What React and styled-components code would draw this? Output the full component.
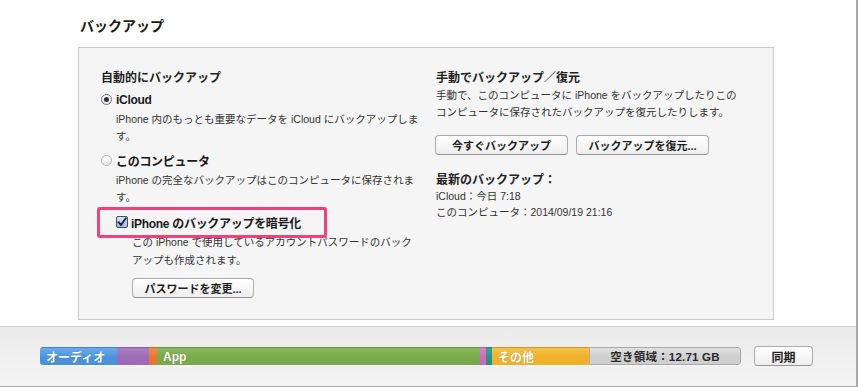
import React from 'react';
import styled, { createGlobalStyle } from 'styled-components';

const GlobalStyle = createGlobalStyle`
	html, body {
		margin: 0;
		padding: 0;
		background: #ffffff;
	}
	body {
		font-family: 'Liberation Sans', 'Noto Sans CJK JP', sans-serif;
		color: #222;
	}
`;

const Window = styled.div`
	width: 858px;
	height: 387px;
	box-sizing: border-box;
	border-right: 2px solid #a9a9a9;
	display: flex;
	flex-direction: column;
	background: #fff;
	overflow: hidden;
`;

const Main = styled.div`
	height: 326px;
	box-sizing: border-box;
	padding: 17px 0 0 78px;
`;

const Title = styled.h1`
	margin: 0 0 12px 2px;
	font-size: 14px;
	line-height: 18px;
	font-weight: bold;
	color: #1a1a1a;
`;

const Panel = styled.div`
	width: 696px;
	height: 273px;
	box-sizing: border-box;
	border: 1px solid #c9c9c9;
	background: #f5f5f5;
	padding: 22px 0 0 22px;
	display: grid;
	grid-template-columns: 335px 1fr;
`;

const Column = styled.div`
	display: flex;
	flex-direction: column;
	align-items: flex-start;
`;

const Heading = styled.div`
	font-size: 12px;
	line-height: 16px;
	font-weight: bold;
	color: #222;
	margin-top: ${(p) => p.$mt || 0}px;
`;

const OptionRow = styled.label`
	position: relative;
	display: flex;
	align-items: center;
	height: ${(p) => p.$h || 19}px;
	margin-top: ${(p) => p.$mt || 0}px;
	padding-left: ${(p) => p.$indent || 0}px;
	font-size: 12px;
	font-weight: bold;
	color: #1a1a1a;
	gap: ${(p) => p.$gap || 4}px;
	letter-spacing: -0.3px;
`;

const Radio = styled.span`
	width: 11px;
	height: 11px;
	box-sizing: border-box;
	border-radius: 50%;
	border: 1px solid ${(p) => (p.$checked ? '#707070' : '#b4b4b4')};
	background: linear-gradient(#ffffff, #e6e6e6);
	display: flex;
	align-items: center;
	justify-content: center;
	&::after {
		content: '';
		display: ${(p) => (p.$checked ? 'block' : 'none')};
		width: 5px;
		height: 5px;
		border-radius: 50%;
		background: #2b3340;
	}
`;

const CheckBox = styled.span`
	width: 12px;
	height: 12px;
	box-sizing: border-box;
	border: 1px solid #3e4f6b;
	border-radius: 2px;
	background: linear-gradient(#dce6f3, #a3b8d6);
	display: flex;
	align-items: center;
	justify-content: center;
`;

/* pink annotation drawn over the encrypt option */
const Highlight = styled.span`
	position: absolute;
	left: -4px;
	top: -6px;
	width: 230px;
	height: 31px;
	box-sizing: border-box;
	border: 3px solid #f0407e;
	border-radius: 3px;
	pointer-events: none;
`;

const Desc = styled.div`
	font-size: 10.5px;
	line-height: ${(p) => p.$lh || 17}px;
	color: #333;
	width: ${(p) => p.$w}px;
	margin-top: ${(p) => p.$mt || 0}px;
	margin-left: ${(p) => p.$indent || 0}px;
`;

const Button = styled.button`
	height: 20px;
	width: ${(p) => p.$w}px;
	box-sizing: border-box;
	margin: 0;
	padding: 0;
	border: 1px solid #acacac;
	border-bottom-color: #959595;
	border-radius: 4px;
	background: linear-gradient(#ffffff, #eeeeee);
	font-family: inherit;
	font-size: 11px;
	font-weight: bold;
	color: #1e1e1e;
	cursor: default;
	margin-top: ${(p) => p.$mt || 0}px;
	margin-left: ${(p) => p.$indent || 0}px;
`;

const ButtonRow = styled.div`
	display: flex;
	gap: 8px;
	margin-top: ${(p) => p.$mt || 0}px;
	margin-left: -1px;
`;

const Footer = styled.div`
	flex: 1;
	box-sizing: border-box;
	border-top: 1px solid #d0d0d0;
	border-bottom: 1px solid #a8a8a8;
	background: linear-gradient(#ebebeb, #f4f4f4);
	padding: 19px 0 0 40px;
	display: flex;
	align-items: flex-start;
	gap: 13px;
`;

const StorageBar = styled.div`
	display: flex;
	width: 701px;
	height: 18px;
	margin-top: 1px;
	border-radius: 3px;
	overflow: hidden;
	box-shadow: 0 1px 0 rgba(255, 255, 255, 0.6);
`;

const Segment = styled.div`
	width: ${(p) => p.$w}px;
	flex: none;
	height: 100%;
	box-sizing: border-box;
	background: linear-gradient(${(p) => p.$top}, ${(p) => p.$color} 60%);
	border-top: 1px solid rgba(0, 0, 0, 0.12);
	display: flex;
	align-items: center;
	padding-left: 6px;
	font-size: 12px;
	font-weight: bold;
	color: #fff;
	text-shadow: 0 0 1px rgba(0, 0, 0, 0.25);
	white-space: nowrap;
`;

const FreeSegment = styled(Segment)`
	flex: 1;
	justify-content: center;
	padding-left: 0;
	font-size: 11.5px;
	color: #2a2a2a;
	text-shadow: none;
	border: 1px solid #a9a9a9;
	border-radius: 0 3px 3px 0;
	letter-spacing: 0.2px;
`;

const SyncButton = styled(Button)`
	font-size: 12px;
`;

const segments = [
	{ label: 'オーディオ', w: 77, top: '#6aabea', color: '#4a91db' },
	{ label: '', w: 32, top: '#ad7dc4', color: '#9d6ab5' },
	{ label: '', w: 8, top: '#f38d45', color: '#e9762a' },
	{ label: 'App', w: 323, top: '#88b85d', color: '#77aa4c' },
	{ label: '', w: 3, top: '#dc7fcd', color: '#cf69be' },
	{ label: '', w: 5, top: '#2fa899', color: '#1b978a' },
	{ label: 'その他', w: 97, top: '#f5c246', color: '#efb02b' },
];

function Check() {
	return (
		<svg width="10" height="10" viewBox="0 0 10 10">
			<path
				d="M1.5 5.2 L4 8 L8.8 1.2"
				fill="none"
				stroke="#1b2638"
				strokeWidth="1.9"
				strokeLinecap="round"
				strokeLinejoin="round"
			/>
		</svg>
	);
}

export default function App() {
	return (
		<>
			<GlobalStyle />
			<Window>
				<Main>
					<Title>バックアップ</Title>
					<Panel>
						<Column>
							<Heading>自動的にバックアップ</Heading>
							<OptionRow $mt={4}>
								<Radio $checked />
								iCloud
							</OptionRow>
							<Desc $w={306} $mt={2} $indent={15}>
								iPhone 内のもっとも重要なデータを iCloud にバックアップします。
							</Desc>
							<OptionRow $mt={6}>
								<Radio />
								このコンピュータ
							</OptionRow>
							<Desc $w={306} $mt={2} $indent={15}>
								iPhone の完全なバックアップはこのコンピュータに保存されます。
							</Desc>
							<OptionRow $mt={7} $h={18} $indent={15} $gap={3}>
								<Highlight />
								<CheckBox>
									<Check />
								</CheckBox>
								iPhone のバックアップを暗号化
							</OptionRow>
							<Desc $w={286} $mt={2} $indent={31} $lh={18}>
								この iPhone で使用しているアカウントパスワードのバックアップも作成されます。
							</Desc>
							<Button $w={122} $mt={9} $indent={31}>
								パスワードを変更...
							</Button>
						</Column>
						<Column>
							<Heading>手動でバックアップ／復元</Heading>
							<Desc $w={306} $mt={1}>
								手動で、このコンピュータに iPhone をバックアップしたりこのコンピュータに保存されたバックアップを復元したりします。
							</Desc>
							<ButtonRow $mt={14}>
								<Button $w={133}>今すぐバックアップ</Button>
								<Button $w={133}>バックアップを復元...</Button>
							</ButtonRow>
							<Heading $mt={17}>最新のバックアップ：</Heading>
							<Desc $w={300} $lh={16}>
								iCloud：今日 7:18
								<br />
								このコンピュータ：2014/09/19 21:16
							</Desc>
						</Column>
					</Panel>
				</Main>
				<Footer>
					<StorageBar>
						{segments.map((s, i) => (
							<Segment key={i} $w={s.w} $top={s.top} $color={s.color}>
								{s.label}
							</Segment>
						))}
						<FreeSegment $top="#e0e0e0" $color="#cfcfcf">
							空き領域：12.71 GB
						</FreeSegment>
					</StorageBar>
					<SyncButton $w={59}>同期</SyncButton>
				</Footer>
			</Window>
		</>
	);
}
